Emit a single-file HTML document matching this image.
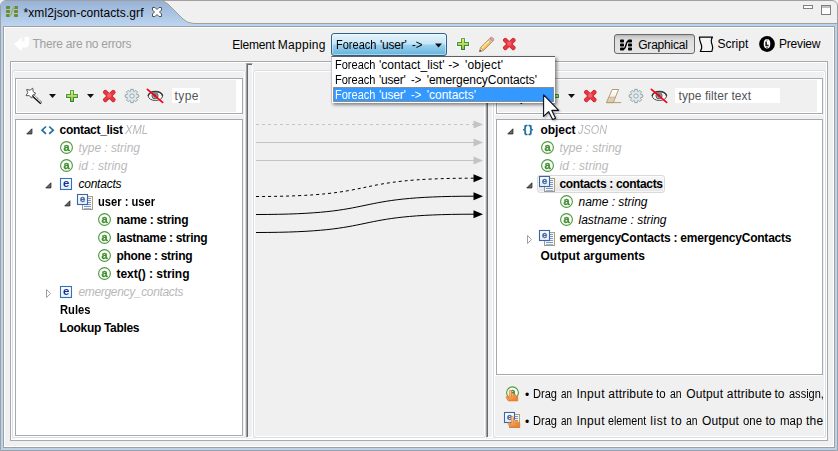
<!DOCTYPE html>
<html><head><meta charset="utf-8"><title>xml2json-contacts.grf</title>
<style>
html,body{margin:0;padding:0}
body{width:838px;height:451px;overflow:hidden;background:#f0f0f0;font:12px/14px "Liberation Sans",sans-serif;color:#000;position:relative}
.a{position:absolute;box-sizing:border-box}
svg{position:absolute;overflow:visible}
.t{position:absolute;transform-origin:0 0;white-space:pre;line-height:14px;font-size:12px;color:#000}
.t.b{font-weight:bold}
.t.i{font-style:italic}
.t.gi{font-style:italic;color:#b9b9bb}
.t.dis{color:#a0a0a0}
.t.w{color:#fff}
.t.flt{color:#555}
.t.hint{color:#000}
#win{left:0;top:0;width:838px;height:451px;border:1px solid #a0a0a0;border-radius:6px 6px 0 0;background:#f0f0f0}
#blue{left:1px;top:24px;width:836px;height:426px;background:#bad3ee}
#inner{left:3px;top:26px;width:832px;height:422px;border:1px solid #a0a0a0;background:#f0f0f0;box-shadow:inset 0 0 0 1px #fff}
#frame{left:10px;top:61px;width:818px;height:380px;border:1px solid #a8a9b0;box-shadow:inset 0 0 0 1px #fff}
.grp{border:1px solid #d5dfe5;border-radius:3px;box-shadow:inset 0 0 0 1px #fff,1px 1px 0 #fff;top:70px;height:368px}
.fr{border:1px solid #a8a9b0;box-shadow:-1px 1px 0 #fff;background:#fff}
.tb{background:#f0f0f0}
.sash{top:63px;height:375px;width:7px;border-left:1px solid #a0a0a0;border-top:1px solid #a0a0a0;border-right:1px solid #fff;border-bottom:1px solid #fff;background:#f0f0f0}
.sash i{position:absolute;left:0;top:0;right:0;bottom:0;border-left:1px solid #696969;border-top:1px solid #696969}
#combo{left:331px;top:33px;width:116px;height:23px;border:1px solid #2c628b;border-radius:3px;background:linear-gradient(#e5f4fc 0%,#c4e5f6 48%,#98d1ef 52%,#68b3db 100%);box-shadow:inset 0 0 0 1px rgba(255,255,255,.45)}
#pop{left:331px;top:56px;width:224px;height:47px;background:#fff;border-top:1px solid #5f5f5f;border-left:1px solid #c4c4cc;box-shadow:2px 2px 3px rgba(0,0,0,.45)}
#sel{left:333px;top:87px;width:221px;height:15px;background:#3399ff;outline:1px dotted #e08020;outline-offset:-1px}
#gbtn{left:614px;top:34px;width:81px;height:20px;border:1px solid #6a6a6a;border-radius:3px;background:linear-gradient(#b6b6b6 0,#d0d0d0 14%,#dedede 32%,#e6e6e6 100%)}
.field{background:#fff}
#selrow{left:537px;top:175px;width:128px;height:18px;border:1px solid #d9d9d9;border-radius:3px;background:linear-gradient(#f8f8f8,#e5e5e5);box-shadow:inset 0 0 0 1px rgba(255,255,255,.6)}

</style></head><body>
<div id="win" class="a"></div>
<div id="blue" class="a"></div>
<div id="inner" class="a"></div>
<!-- tab -->
<svg width="838" height="30" style="left:0;top:0">
<defs><linearGradient id="tg" x1="0" y1="0" x2="0" y2="1"><stop offset="0" stop-color="#96b2d6"/><stop offset="1" stop-color="#bdd5ef"/></linearGradient></defs>
<path d="M1 26 L1 5 Q1 1 5 1 L159 1 Q164.5 1 168 4.3 L183 19.3 Q187.5 23.5 194 23.5 L837 23.5 L837 26 Z" fill="#bad3ee"/>
<path d="M1 26 L1 5 Q1 1 5 1 L159 1 Q164.5 1 168 4.3 L183 19.3 Q187.5 23.5 194 23.5 L194 26 Z" fill="url(#tg)"/>
<path d="M159 0.5 Q164.5 0.5 168 4 L183 19 Q187.5 23.5 194 23.5 L837.5 23.5" fill="none" stroke="#a0a0a0" stroke-width="1"/>
</svg>
<div id="frame" class="a"></div>
<!-- left group -->
<div class="a grp" style="left:12px;width:234px"></div>
<div class="a fr" style="left:15px;top:78px;width:228px;height:36px"><div class="a tb" style="left:1px;top:1px;width:219px;height:32px"></div></div>
<div class="a field" style="left:172px;top:88px;width:28px;height:15px"></div>
<div class="a fr" style="left:15px;top:119px;width:228px;height:317px"></div>
<!-- mid group -->
<div class="a grp" style="left:253px;width:233px"></div>
<!-- right group -->
<div class="a grp" style="left:493px;width:333px"></div>
<div class="a fr" style="left:496px;top:78px;width:327px;height:36px"><div class="a tb" style="left:1px;top:1px;width:319px;height:32px"></div></div>
<div class="a field" style="left:675px;top:88px;width:105px;height:15px"></div>
<div class="a fr" style="left:496px;top:119px;width:327px;height:256px"></div>
<div id="selrow" class="a"></div>
<!-- sashes -->
<div class="a sash" style="left:246px"><i></i></div>
<div class="a sash" style="left:486px"><i></i></div>

<!-- top toolbar -->
<div id="combo" class="a"></div>
<div id="gbtn" class="a"></div>
<svg width="838" height="451" style="left:0;top:0" viewBox="0 0 838 451"><path d="M256 124.5 H474" stroke="#c3c3c3" stroke-width="1" stroke-dasharray="3 3" fill="none"/><path d="M483 124.5 L473.5 120.5 L473.5 128.5 Z" fill="#c3c3c3"/><path d="M256 142.5 H474" stroke="#c3c3c3" stroke-width="1" fill="none"/><path d="M483 142.5 L473.5 138.5 L473.5 146.5 Z" fill="#c3c3c3"/><path d="M256 160.5 H474" stroke="#c3c3c3" stroke-width="1" fill="none"/><path d="M483 160.5 L473.5 156.5 L473.5 164.5 Z" fill="#c3c3c3"/><path d="M256 196.5 C386.79999999999995 196.5 343.20000000000005 178.2 474 178.2" stroke="#000" stroke-width="1" fill="none" stroke-dasharray="3 3"/><path d="M483 178.2 L473.5 174.2 L473.5 182.2 Z" fill="#000"/><path d="M256 214.5 C386.79999999999995 214.5 343.20000000000005 196.2 474 196.2" stroke="#000" stroke-width="1" fill="none" /><path d="M483 196.2 L473.5 192.2 L473.5 200.2 Z" fill="#000"/><path d="M256 232.5 C386.79999999999995 232.5 343.20000000000005 214.2 474 214.2" stroke="#000" stroke-width="1" fill="none" /><path d="M483 214.2 L473.5 210.2 L473.5 218.2 Z" fill="#000"/></svg><svg width="838" height="451" style="left:0;top:0;opacity:.999" viewBox="0 0 838 451"><defs>
<linearGradient id="eg" x1="0" y1="0" x2="0" y2="1"><stop offset="0" stop-color="#fff"/><stop offset="1" stop-color="#e2effb"/></linearGradient>
<linearGradient id="pg" x1="0" y1="0" x2="0" y2="1"><stop offset="0" stop-color="#e6f060"/><stop offset="0.5" stop-color="#c2d84c"/><stop offset="1" stop-color="#90bc40"/></linearGradient>
<linearGradient id="pb" x1="0" y1="0" x2="0" y2="1"><stop offset="0" stop-color="#4fae62"/><stop offset="1" stop-color="#2a7a3a"/></linearGradient>
<linearGradient id="rg" gradientUnits="userSpaceOnUse" x1="0" y1="0" x2="0" y2="1"><stop offset="0" stop-color="#f05a64"/><stop offset="1" stop-color="#e03040"/></linearGradient>
<linearGradient id="hg" x1="0" y1="0" x2="0.3" y2="1"><stop offset="0" stop-color="#fde2c4"/><stop offset="0.55" stop-color="#f8b070"/><stop offset="1" stop-color="#ee8434"/></linearGradient>
<linearGradient id="erg" x1="0" y1="0" x2="0" y2="1"><stop offset="0" stop-color="#fff"/><stop offset="1" stop-color="#efe6d6"/></linearGradient>
</defs><rect x="6" y="6" width="4" height="3" rx="0.8" fill="#6b8b2c"/><rect x="14" y="6" width="4" height="3" rx="0.8" fill="#6b8b2c"/><rect x="6" y="10" width="4" height="3" rx="0.8" fill="#6b8b2c"/><rect x="14" y="10" width="4" height="3" rx="0.8" fill="#6b8b2c"/><rect x="6" y="14" width="4" height="3" rx="0.8" fill="#6b8b2c"/><rect x="14" y="14" width="4" height="3" rx="0.8" fill="#6b8b2c"/><path d="M9 15.7 C13 15.7 11 7.3 15 7.3" fill="none" stroke="#9db356" stroke-width="1.4"/><path transform="translate(152,7)" d="M0.5 0.5 L3 0.5 L5 2.5 L7 0.5 L9.5 0.5 L9.5 3 L7.5 5 L9.5 7 L9.5 9.5 L7 9.5 L5 7.5 L3 9.5 L0.5 9.5 L0.5 7 L2.5 5 L0.5 3 Z" fill="#fff" stroke="#505458" stroke-width="1" stroke-linejoin="miter"/><rect x="803.5" y="5.5" width="9" height="3" fill="#fff" stroke="#808080"/><rect x="821.5" y="5.5" width="9" height="9" fill="#fff" stroke="#808080"/><path d="M821.5 7 H830.5" stroke="#808080"/><path transform="translate(14,37)" d="M0 7.3 L7.6 0.6 L7.6 4.2 L10.6 4.2 L10.6 0 L15 0 L15 6.5 Q15 10.6 10.8 10.6 L7.6 10.6 L7.6 14.2 Z" fill="#fff"/><path d="M435 43.5 h7 l-3.5 4 z" fill="#101010"/><g transform="translate(457,38)"><path d="M4 0 h4 v4 h4 v4 h-4 v4 h-4 v-4 h-4 v-4 h4 z" fill="none" stroke="#fff" stroke-opacity="0.55" stroke-width="1.6"/><path d="M4 0 h4 v4 h4 v4 h-4 v4 h-4 v-4 h-4 v-4 h4 z" fill="url(#pb)"/><path d="M5 1 h2 v4 h4 v2 h-4 v4 h-2 v-4 h-4 v-2 h4 z" fill="url(#pg)"/></g><g transform="translate(479,37)"><path d="M0.5 14.6 L1.6 10.6 L10.9 1.3 L13.8 4.2 L4.5 13.5 Z" fill="#f0c060" stroke="#b8803c" stroke-width="0.8" stroke-linejoin="round"/><path d="M2.9 11.2 L11.6 2.5" stroke="#fdf0c0" stroke-width="1.1"/><path d="M9.3 2.9 L12.2 5.8 L13.8 4.2 L10.9 1.3 Z" fill="#c8c8cc" stroke="#9a9aa0" stroke-width="0.5"/><path d="M10.9 1.3 L11.8 0.5 Q12.9 0 13.8 0.9 L14.3 1.5 Q15 2.5 14.5 3.4 L13.8 4.2 Z" fill="#f0a8a0" stroke="#c07068" stroke-width="0.8"/><path d="M0.5 14.6 L1.6 10.6 L4.5 13.5 Z" fill="#f4e4c4" stroke="#b8803c" stroke-width="0.5"/><path d="M0.4 14.7 L1.1 12.4 L2.7 14 Z" fill="#2848a8"/></g><rect x="502.2" y="42.35" width="14.2" height="3.3" rx="1.1" transform="rotate(44 509.3 44)" fill="#c41c2a" stroke="#c8202e" stroke-width="1"/><rect x="502.2" y="42.35" width="14.2" height="3.3" rx="1.1" transform="rotate(-44 509.3 44)" fill="#c41c2a" stroke="#c8202e" stroke-width="1"/><rect x="502.2" y="42.35" width="14.2" height="3.3" rx="1.1" transform="rotate(44 509.3 44)" fill="#e8363f"/><rect x="502.2" y="42.35" width="14.2" height="3.3" rx="1.1" transform="rotate(-44 509.3 44)" fill="#e8363f"/><circle cx="509.3" cy="43.5" r="2.2" fill="#f4707a" opacity="0.7"/><rect x="620" y="39.5" width="4" height="3" rx="0.8" fill="#000"/><rect x="628" y="39.5" width="4" height="3" rx="0.8" fill="#000"/><rect x="620" y="43.5" width="4" height="3" rx="0.8" fill="#000"/><rect x="628" y="43.5" width="4" height="3" rx="0.8" fill="#000"/><rect x="620" y="47.5" width="4" height="3" rx="0.8" fill="#000"/><rect x="628" y="47.5" width="4" height="3" rx="0.8" fill="#000"/><path d="M623 49.2 C627 49.2 625 40.8 629 40.8" fill="none" stroke="#000" stroke-width="1.4"/><path transform="translate(699,36.5)" d="M0.4 0.6 L13.5 0.6 C11.2 4 12.2 6 13.2 8.5 C14.2 11 13.8 13 12.8 15 L1.3 15 C2 13.5 3 12 2.7 10 C2.4 7 0.4 5 0.4 0.6 Z" fill="#f4f4f4" stroke="#000" stroke-width="1.2" stroke-linejoin="round"/><circle cx="767" cy="44" r="7.9" fill="#000"/><ellipse cx="767" cy="43.8" rx="3.3" ry="4.7" fill="#fff"/><path d="M766.1 41.4 V45.4 H768.6" fill="none" stroke="#111" stroke-width="1.5"/><rect x="766.2" y="39.6" width="1.6" height="0.8" fill="#444"/><rect x="766.2" y="47.2" width="1.6" height="0.8" fill="#444"/><g transform="translate(26,88)"><path d="M6.6 7.6 L15.2 15.4" stroke="#111" stroke-width="2.5" stroke-linecap="butt"/><path d="M7.4 7.4 L15.4 14.6" stroke="#fff" stroke-width="1.1"/><path d="M8.0 6.9 L16 14.1" stroke="#222" stroke-width="0.7" stroke-dasharray="1 1"/><path d="M9.87 5.55 L6.76 6.94 L5.70 10.18 L3.42 7.65 L0.01 7.65 L1.72 4.70 L0.66 1.45 L4.00 2.16 L6.76 0.16 L7.11 3.55 Z" fill="#fff" stroke="#5a5a5a" stroke-width="1" stroke-linejoin="round"/></g><path d="M49 94 h7 l-3.5 4 z" fill="#101010"/><g transform="translate(66,90)"><path d="M4 0 h4 v4 h4 v4 h-4 v4 h-4 v-4 h-4 v-4 h4 z" fill="none" stroke="#fff" stroke-opacity="0.55" stroke-width="1.6"/><path d="M4 0 h4 v4 h4 v4 h-4 v4 h-4 v-4 h-4 v-4 h4 z" fill="url(#pb)"/><path d="M5 1 h2 v4 h4 v2 h-4 v4 h-2 v-4 h-4 v-2 h4 z" fill="url(#pg)"/></g><path d="M87 94 h7 l-3.5 4 z" fill="#101010"/><rect x="102.2" y="94.35" width="14.2" height="3.3" rx="1.1" transform="rotate(44 109.3 96)" fill="#c41c2a" stroke="#c8202e" stroke-width="1"/><rect x="102.2" y="94.35" width="14.2" height="3.3" rx="1.1" transform="rotate(-44 109.3 96)" fill="#c41c2a" stroke="#c8202e" stroke-width="1"/><rect x="102.2" y="94.35" width="14.2" height="3.3" rx="1.1" transform="rotate(44 109.3 96)" fill="#e8363f"/><rect x="102.2" y="94.35" width="14.2" height="3.3" rx="1.1" transform="rotate(-44 109.3 96)" fill="#e8363f"/><circle cx="109.3" cy="95.5" r="2.2" fill="#f4707a" opacity="0.7"/><path d="M130.72 89.32 L133.28 89.32 L133.48 91.22 L134.33 91.58 L135.81 90.37 L137.63 92.19 L136.42 93.67 L136.78 94.52 L138.68 94.72 L138.68 97.28 L136.78 97.48 L136.42 98.33 L137.63 99.81 L135.81 101.63 L134.33 100.42 L133.48 100.78 L133.28 102.68 L130.72 102.68 L130.52 100.78 L129.67 100.42 L128.19 101.63 L126.37 99.81 L127.58 98.33 L127.22 97.48 L125.32 97.28 L125.32 94.72 L127.22 94.52 L127.58 93.67 L126.37 92.19 L128.19 90.37 L129.67 91.58 L130.52 91.22 Z" fill="#dfe8ea" stroke="#8c9fa3" stroke-width="0.9" stroke-linejoin="round"/><circle cx="132" cy="96" r="2.1" fill="#f4f7f8" stroke="#8c9fa3" stroke-width="0.9"/><ellipse cx="155.4" cy="96" rx="7.2" ry="4.5" fill="#f6f6f6" stroke="#4c4c4c" stroke-width="1"/><path d="M148.20000000000002 96 A7.2 4.5 0 0 1 162.6 96" fill="none" stroke="#3c3c3c" stroke-width="1.5"/><circle cx="155.0" cy="95.8" r="3.1" fill="#9a9a9a" stroke="#5a5a5a" stroke-width="0.9"/><circle cx="155.0" cy="95.6" r="1.3" fill="#444"/><path d="M147.4 89.4 L162.6 102.4" stroke="#f60018" stroke-width="1.7" stroke-linecap="round"/><g transform="translate(507,88)"><path d="M6.6 7.6 L15.2 15.4" stroke="#111" stroke-width="2.5" stroke-linecap="butt"/><path d="M7.4 7.4 L15.4 14.6" stroke="#fff" stroke-width="1.1"/><path d="M8.0 6.9 L16 14.1" stroke="#222" stroke-width="0.7" stroke-dasharray="1 1"/><path d="M9.87 5.55 L6.76 6.94 L5.70 10.18 L3.42 7.65 L0.01 7.65 L1.72 4.70 L0.66 1.45 L4.00 2.16 L6.76 0.16 L7.11 3.55 Z" fill="#fff" stroke="#5a5a5a" stroke-width="1" stroke-linejoin="round"/></g><path d="M530 94 h7 l-3.5 4 z" fill="#101010"/><g transform="translate(547,90)"><path d="M4 0 h4 v4 h4 v4 h-4 v4 h-4 v-4 h-4 v-4 h4 z" fill="none" stroke="#fff" stroke-opacity="0.55" stroke-width="1.6"/><path d="M4 0 h4 v4 h4 v4 h-4 v4 h-4 v-4 h-4 v-4 h4 z" fill="url(#pb)"/><path d="M5 1 h2 v4 h4 v2 h-4 v4 h-2 v-4 h-4 v-2 h4 z" fill="url(#pg)"/></g><path d="M568 94 h7 l-3.5 4 z" fill="#101010"/><rect x="583.1999999999999" y="94.35" width="14.2" height="3.3" rx="1.1" transform="rotate(44 590.3 96)" fill="#c41c2a" stroke="#c8202e" stroke-width="1"/><rect x="583.1999999999999" y="94.35" width="14.2" height="3.3" rx="1.1" transform="rotate(-44 590.3 96)" fill="#c41c2a" stroke="#c8202e" stroke-width="1"/><rect x="583.1999999999999" y="94.35" width="14.2" height="3.3" rx="1.1" transform="rotate(44 590.3 96)" fill="#e8363f"/><rect x="583.1999999999999" y="94.35" width="14.2" height="3.3" rx="1.1" transform="rotate(-44 590.3 96)" fill="#e8363f"/><circle cx="590.3" cy="95.5" r="2.2" fill="#f4707a" opacity="0.7"/><g transform="translate(606,89)"><path d="M6.2 0.5 L12.6 0.5 L7.2 13.6 L0.5 13.6 Z" fill="url(#erg)" stroke="#b39b6b" stroke-width="1"/><path d="M2.9 8.2 L9.4 8.2 L7.2 13.6 L0.5 13.6 Z" fill="#dccdb4" stroke="#b39b6b" stroke-width="0.6"/><path d="M0.5 13.6 L15.2 13.6" stroke="#b39b6b" stroke-width="1"/></g><path d="M634.72 89.32 L637.28 89.32 L637.48 91.22 L638.33 91.58 L639.81 90.37 L641.63 92.19 L640.42 93.67 L640.78 94.52 L642.68 94.72 L642.68 97.28 L640.78 97.48 L640.42 98.33 L641.63 99.81 L639.81 101.63 L638.33 100.42 L637.48 100.78 L637.28 102.68 L634.72 102.68 L634.52 100.78 L633.67 100.42 L632.19 101.63 L630.37 99.81 L631.58 98.33 L631.22 97.48 L629.32 97.28 L629.32 94.72 L631.22 94.52 L631.58 93.67 L630.37 92.19 L632.19 90.37 L633.67 91.58 L634.52 91.22 Z" fill="#dfe8ea" stroke="#8c9fa3" stroke-width="0.9" stroke-linejoin="round"/><circle cx="636" cy="96" r="2.1" fill="#f4f7f8" stroke="#8c9fa3" stroke-width="0.9"/><ellipse cx="659.4" cy="96" rx="7.2" ry="4.5" fill="#f6f6f6" stroke="#4c4c4c" stroke-width="1"/><path d="M652.1999999999999 96 A7.2 4.5 0 0 1 666.6 96" fill="none" stroke="#3c3c3c" stroke-width="1.5"/><circle cx="659.0" cy="95.8" r="3.1" fill="#9a9a9a" stroke="#5a5a5a" stroke-width="0.9"/><circle cx="659.0" cy="95.6" r="1.3" fill="#444"/><path d="M651.4 89.4 L666.6 102.4" stroke="#f60018" stroke-width="1.7" stroke-linecap="round"/><path d="M26.8 133.9 L31.9 133.9 L31.9 128.8 Z" fill="#686868" stroke="#2a2a2a" stroke-width="0.9" stroke-linejoin="round"/><path d="M46 126.5 L42 130.2 L46 133.8 M49.2 126.5 L53.2 130.2 L49.2 133.8" fill="none" stroke="#1e6e9c" stroke-width="1.7"/><circle cx="66.5" cy="147.5" r="5.9" fill="#fff" stroke="#4c9c3c" stroke-width="1.15"/><text x="66.5" y="150.7" text-anchor="middle" font-family="Liberation Sans, sans-serif" font-weight="bold" font-size="11" fill="#3f8f2f" stroke="#3f8f2f" stroke-width="0.3">a</text><circle cx="66.5" cy="165.5" r="5.9" fill="#fff" stroke="#4c9c3c" stroke-width="1.15"/><text x="66.5" y="168.7" text-anchor="middle" font-family="Liberation Sans, sans-serif" font-weight="bold" font-size="11" fill="#3f8f2f" stroke="#3f8f2f" stroke-width="0.3">a</text><path d="M45.8 187.9 L50.9 187.9 L50.9 182.8 Z" fill="#686868" stroke="#2a2a2a" stroke-width="0.9" stroke-linejoin="round"/><rect x="60.5" y="178.5" width="11" height="11" fill="url(#eg)" stroke="#3573b5" stroke-width="1.1"/><text x="66.2" y="187.1" text-anchor="middle" font-family="Liberation Sans, sans-serif" font-weight="bold" font-size="11.5" fill="#1a2f9a">e</text><path d="M64.8 205.9 L69.9 205.9 L69.9 200.8 Z" fill="#686868" stroke="#2a2a2a" stroke-width="0.9" stroke-linejoin="round"/><rect x="82.5" y="196.5" width="10" height="13" fill="#f4f7fc" stroke="#9a9a8a" stroke-width="1"/><path d="M82.5 196.5 H92.5 V209.5" fill="none" stroke="#b0a070" stroke-width="1"/><rect x="88" y="198" width="3" height="1" fill="#8494c8"/><rect x="88" y="200" width="3" height="1" fill="#8494c8"/><rect x="88" y="202" width="3" height="1" fill="#8494c8"/><rect x="88" y="204" width="3" height="1" fill="#8494c8"/><rect x="88" y="206" width="3" height="1" fill="#8494c8"/><rect x="84" y="206" width="7" height="1" fill="#8494c8"/><rect x="84" y="208" width="7" height="1" fill="#a4b0d8"/><rect x="77.5" y="194.5" width="10" height="10" fill="url(#eg)" stroke="#3867a8" stroke-width="1.1"/><text x="82.6" y="202.2" text-anchor="middle" font-family="Liberation Sans, sans-serif" font-weight="bold" font-size="9.5" fill="#55679f" stroke="#55679f" stroke-width="0.4">e</text><circle cx="104.5" cy="219.5" r="5.9" fill="#fff" stroke="#4c9c3c" stroke-width="1.15"/><text x="104.5" y="222.7" text-anchor="middle" font-family="Liberation Sans, sans-serif" font-weight="bold" font-size="11" fill="#3f8f2f" stroke="#3f8f2f" stroke-width="0.3">a</text><circle cx="104.5" cy="237.5" r="5.9" fill="#fff" stroke="#4c9c3c" stroke-width="1.15"/><text x="104.5" y="240.7" text-anchor="middle" font-family="Liberation Sans, sans-serif" font-weight="bold" font-size="11" fill="#3f8f2f" stroke="#3f8f2f" stroke-width="0.3">a</text><circle cx="104.5" cy="255.5" r="5.9" fill="#fff" stroke="#4c9c3c" stroke-width="1.15"/><text x="104.5" y="258.7" text-anchor="middle" font-family="Liberation Sans, sans-serif" font-weight="bold" font-size="11" fill="#3f8f2f" stroke="#3f8f2f" stroke-width="0.3">a</text><circle cx="104.5" cy="273.5" r="5.9" fill="#fff" stroke="#4c9c3c" stroke-width="1.15"/><text x="104.5" y="276.7" text-anchor="middle" font-family="Liberation Sans, sans-serif" font-weight="bold" font-size="11" fill="#3f8f2f" stroke="#3f8f2f" stroke-width="0.3">a</text><path d="M46.5 289.5 L50.6 293.5 L46.5 297.5 Z" fill="#fff" stroke="#a0a0a0" stroke-width="1"/><rect x="60.5" y="286.5" width="11" height="11" fill="url(#eg)" stroke="#3573b5" stroke-width="1.1"/><text x="66.2" y="295.1" text-anchor="middle" font-family="Liberation Sans, sans-serif" font-weight="bold" font-size="11.5" fill="#1a2f9a">e</text><path d="M507.8 133.9 L512.9 133.9 L512.9 128.8 Z" fill="#686868" stroke="#2a2a2a" stroke-width="0.9" stroke-linejoin="round"/><text x="523" y="133.2" font-family="Liberation Sans, sans-serif" font-weight="bold" font-size="11.5" fill="#1e6e9c" stroke="#1e6e9c" stroke-width="0.35" letter-spacing="1.1">{}</text><circle cx="547.5" cy="147.5" r="5.9" fill="#fff" stroke="#4c9c3c" stroke-width="1.15"/><text x="547.5" y="150.7" text-anchor="middle" font-family="Liberation Sans, sans-serif" font-weight="bold" font-size="11" fill="#3f8f2f" stroke="#3f8f2f" stroke-width="0.3">a</text><circle cx="547.5" cy="165.5" r="5.9" fill="#fff" stroke="#4c9c3c" stroke-width="1.15"/><text x="547.5" y="168.7" text-anchor="middle" font-family="Liberation Sans, sans-serif" font-weight="bold" font-size="11" fill="#3f8f2f" stroke="#3f8f2f" stroke-width="0.3">a</text><path d="M526.8 187.9 L531.9 187.9 L531.9 182.8 Z" fill="#686868" stroke="#2a2a2a" stroke-width="0.9" stroke-linejoin="round"/><rect x="544.5" y="178.5" width="10" height="13" fill="#f4f7fc" stroke="#9a9a8a" stroke-width="1"/><path d="M544.5 178.5 H554.5 V191.5" fill="none" stroke="#b0a070" stroke-width="1"/><rect x="550" y="180" width="3" height="1" fill="#8494c8"/><rect x="550" y="182" width="3" height="1" fill="#8494c8"/><rect x="550" y="184" width="3" height="1" fill="#8494c8"/><rect x="550" y="186" width="3" height="1" fill="#8494c8"/><rect x="550" y="188" width="3" height="1" fill="#8494c8"/><rect x="546" y="188" width="7" height="1" fill="#8494c8"/><rect x="546" y="190" width="7" height="1" fill="#a4b0d8"/><rect x="539.5" y="176.5" width="10" height="10" fill="url(#eg)" stroke="#3867a8" stroke-width="1.1"/><text x="544.6" y="184.2" text-anchor="middle" font-family="Liberation Sans, sans-serif" font-weight="bold" font-size="9.5" fill="#55679f" stroke="#55679f" stroke-width="0.4">e</text><circle cx="566.5" cy="201.5" r="5.9" fill="#fff" stroke="#4c9c3c" stroke-width="1.15"/><text x="566.5" y="204.7" text-anchor="middle" font-family="Liberation Sans, sans-serif" font-weight="bold" font-size="11" fill="#3f8f2f" stroke="#3f8f2f" stroke-width="0.3">a</text><circle cx="566.5" cy="219.5" r="5.9" fill="#fff" stroke="#4c9c3c" stroke-width="1.15"/><text x="566.5" y="222.7" text-anchor="middle" font-family="Liberation Sans, sans-serif" font-weight="bold" font-size="11" fill="#3f8f2f" stroke="#3f8f2f" stroke-width="0.3">a</text><path d="M527.5 235.5 L531.6 239.5 L527.5 243.5 Z" fill="#fff" stroke="#a0a0a0" stroke-width="1"/><rect x="544.5" y="232.5" width="10" height="13" fill="#f4f7fc" stroke="#9a9a8a" stroke-width="1"/><path d="M544.5 232.5 H554.5 V245.5" fill="none" stroke="#b0a070" stroke-width="1"/><rect x="550" y="234" width="3" height="1" fill="#8494c8"/><rect x="550" y="236" width="3" height="1" fill="#8494c8"/><rect x="550" y="238" width="3" height="1" fill="#8494c8"/><rect x="550" y="240" width="3" height="1" fill="#8494c8"/><rect x="550" y="242" width="3" height="1" fill="#8494c8"/><rect x="546" y="242" width="7" height="1" fill="#8494c8"/><rect x="546" y="244" width="7" height="1" fill="#a4b0d8"/><rect x="539.5" y="230.5" width="10" height="10" fill="url(#eg)" stroke="#3867a8" stroke-width="1.1"/><text x="544.6" y="238.2" text-anchor="middle" font-family="Liberation Sans, sans-serif" font-weight="bold" font-size="9.5" fill="#55679f" stroke="#55679f" stroke-width="0.4">e</text><circle cx="512.5" cy="392.8" r="5.9" fill="#fff" stroke="#4c9c3c" stroke-width="1.15"/><text x="512.5" y="396.0" text-anchor="middle" font-family="Liberation Sans, sans-serif" font-weight="bold" font-size="11" fill="#3f8f2f" stroke="#3f8f2f" stroke-width="0.3">a</text><g transform="translate(506,390)"><path d="M3.2 1 Q3.2 0 4.3 0 Q5.4 0 5.4 1 L5.4 3.8 Q6.8 3 7.8 3.9 L7.9 4.8 Q9.2 4.2 10 5 L10.1 6.2 Q11.8 5.8 11.8 7.2 L11.8 10.9 L2.4 10.9 L0.2 7.8 Q-0.2 6.8 0.8 6.3 Q1.6 6 2.2 6.8 L3.2 7.8 Z" fill="url(#hg)" stroke="#dc7c2c" stroke-width="0.7" stroke-linejoin="round"/><path d="M5.6 4.2 V7 M8 5.2 V7.6 M10.2 6.4 V8.2" stroke="#d47426" stroke-width="0.7" fill="none"/><path d="M0.9 7 L2.6 9.2" stroke="#d47426" stroke-width="0.6" stroke-dasharray="0.8 0.8" fill="none"/></g><rect x="509.5" y="414.5" width="10" height="13" fill="#f4f7fc" stroke="#9a9a8a" stroke-width="1"/><path d="M509.5 414.5 H519.5 V427.5" fill="none" stroke="#b0a070" stroke-width="1"/><rect x="515" y="416" width="3" height="1" fill="#8494c8"/><rect x="515" y="418" width="3" height="1" fill="#8494c8"/><rect x="515" y="420" width="3" height="1" fill="#8494c8"/><rect x="515" y="422" width="3" height="1" fill="#8494c8"/><rect x="515" y="424" width="3" height="1" fill="#8494c8"/><rect x="511" y="424" width="7" height="1" fill="#8494c8"/><rect x="511" y="426" width="7" height="1" fill="#a4b0d8"/><rect x="504.5" y="412.5" width="10" height="10" fill="url(#eg)" stroke="#3867a8" stroke-width="1.1"/><text x="509.6" y="420.2" text-anchor="middle" font-family="Liberation Sans, sans-serif" font-weight="bold" font-size="9.5" fill="#55679f" stroke="#55679f" stroke-width="0.4">e</text><g transform="translate(508,416.4)"><path d="M3.2 1 Q3.2 0 4.3 0 Q5.4 0 5.4 1 L5.4 3.8 Q6.8 3 7.8 3.9 L7.9 4.8 Q9.2 4.2 10 5 L10.1 6.2 Q11.8 5.8 11.8 7.2 L11.8 10.9 L2.4 10.9 L0.2 7.8 Q-0.2 6.8 0.8 6.3 Q1.6 6 2.2 6.8 L3.2 7.8 Z" fill="url(#hg)" stroke="#dc7c2c" stroke-width="0.7" stroke-linejoin="round"/><path d="M5.6 4.2 V7 M8 5.2 V7.6 M10.2 6.4 V8.2" stroke="#d47426" stroke-width="0.7" fill="none"/><path d="M0.9 7 L2.6 9.2" stroke="#d47426" stroke-width="0.6" stroke-dasharray="0.8 0.8" fill="none"/></g></svg>
<!-- popup -->
<div id="pop" class="a"></div>
<div id="sel" class="a"></div>

<span id="t0" class="t " style="left:23.5px;top:6.0px;letter-spacing:0.093px;">*xml2json-contacts.grf</span>
<span id="t1" class="t dis" style="left:32.5px;top:37.0px;letter-spacing:-0.244px;">There are no errors</span>
<span id="t2" class="t " style="left:232.2px;top:38.0px;letter-spacing:-0.172px;">Element</span>
<span id="t3" class="t " style="left:277.8px;top:38.0px;letter-spacing:0.278px;">Mapping</span>
<span id="t4" class="t " style="left:335.5px;top:38.0px;transform:scaleX(0.9175);">Foreach</span>
<span id="t5" class="t " style="left:379.9px;top:38.0px;letter-spacing:-0.207px;">'user'</span>
<span id="t6" class="t " style="left:411.5px;top:38.0px;transform:scaleX(0.9532);">-></span>
<span id="t7" class="t " style="left:638.2px;top:38.0px;letter-spacing:-0.195px;">Graphical</span>
<span id="t8" class="t " style="left:717.5px;top:37.0px;letter-spacing:0.022px;">Script</span>
<span id="t9" class="t " style="left:779.0px;top:37.0px;letter-spacing:-0.198px;">Preview</span>
<span id="t10" class="t " style="left:334.5px;top:58.0px;transform:scaleX(0.9175);">Foreach</span>
<span id="t11" class="t " style="left:378.9px;top:58.0px;letter-spacing:0.075px;">'contact_list'</span>
<span id="t12" class="t " style="left:448.2px;top:58.0px;letter-spacing:-0.016px;">-></span>
<span id="t13" class="t " style="left:464.9px;top:58.0px;letter-spacing:0.213px;">'object'</span>
<span id="t14" class="t " style="left:334.5px;top:73.0px;transform:scaleX(0.9175);">Foreach</span>
<span id="t15" class="t " style="left:378.9px;top:73.0px;letter-spacing:-0.207px;">'user'</span>
<span id="t16" class="t " style="left:410.5px;top:73.0px;transform:scaleX(0.9532);">-></span>
<span id="t17" class="t " style="left:426.7px;top:73.0px;letter-spacing:-0.056px;">'emergencyContacts'</span>
<span id="t18" class="t w" style="left:334.5px;top:88.0px;transform:scaleX(0.9175);">Foreach</span>
<span id="t19" class="t w" style="left:378.9px;top:88.0px;letter-spacing:-0.207px;">'user'</span>
<span id="t20" class="t w" style="left:410.5px;top:88.0px;transform:scaleX(0.9532);">-></span>
<span id="t21" class="t w" style="left:426.7px;top:88.0px;letter-spacing:0.002px;">'contacts'</span>
<span id="t22" class="t flt" style="left:174.5px;top:89.0px;letter-spacing:0.438px;">type</span>
<span id="t23" class="t flt" style="left:678.5px;top:89.0px;letter-spacing:0.075px;">type filter text</span>
<span id="t24" class="t b" style="left:59.5px;top:123.0px;letter-spacing:-0.290px;">contact_list</span>
<span id="t25" class="t gi" style="left:125.0px;top:123.0px;transform:scaleX(0.9316);">XML</span>
<span id="t26" class="t gi" style="left:78.5px;top:141.0px;letter-spacing:-0.044px;">type : string</span>
<span id="t27" class="t gi" style="left:78.5px;top:159.0px;letter-spacing:0.031px;">id : string</span>
<span id="t28" class="t i" style="left:78.5px;top:177.0px;letter-spacing:-0.243px;">contacts</span>
<span id="t29" class="t b" style="left:97.5px;top:195.0px;transform:scaleX(0.9290);">user : user</span>
<span id="t30" class="t b" style="left:116.5px;top:213.0px;letter-spacing:-0.280px;">name : string</span>
<span id="t31" class="t b" style="left:116.5px;top:231.0px;letter-spacing:-0.314px;">lastname : string</span>
<span id="t32" class="t b" style="left:116.5px;top:249.0px;letter-spacing:-0.308px;">phone : string</span>
<span id="t33" class="t b" style="left:116.5px;top:267.0px;letter-spacing:-0.025px;">text() : string</span>
<span id="t34" class="t gi" style="left:78.5px;top:285.0px;letter-spacing:-0.337px;">emergency_contacts</span>
<span id="t35" class="t b" style="left:59.5px;top:303.0px;transform:scaleX(0.9331);">Rules</span>
<span id="t36" class="t b" style="left:59.5px;top:321.0px;letter-spacing:-0.316px;">Lookup Tables</span>
<span id="t37" class="t b" style="left:540.5px;top:123.0px;letter-spacing:-0.069px;">object</span>
<span id="t38" class="t gi" style="left:577.5px;top:123.0px;transform:scaleX(0.9058);">JSON</span>
<span id="t39" class="t gi" style="left:559.5px;top:141.0px;letter-spacing:-0.003px;">type : string</span>
<span id="t40" class="t gi" style="left:559.5px;top:159.0px;letter-spacing:0.031px;">id : string</span>
<span id="t41" class="t b" style="left:559.5px;top:177.0px;letter-spacing:-0.326px;">contacts : contacts</span>
<span id="t42" class="t i" style="left:578.5px;top:195.0px;letter-spacing:-0.031px;">name : string</span>
<span id="t43" class="t i" style="left:578.5px;top:213.0px;letter-spacing:-0.003px;">lastname : string</span>
<span id="t44" class="t b" style="left:559.5px;top:231.0px;letter-spacing:-0.225px;">emergencyContacts : emergencyContacts</span>
<span id="t45" class="t b" style="left:540.5px;top:249.0px;letter-spacing:0.033px;">Output arguments</span>
<span id="t46" class="t hint" style="left:525.1px;top:388.0px;letter-spacing:0.497px;">•</span>
<span id="t47" class="t hint" style="left:533.2px;top:387.0px;transform:scaleX(0.9225);">Drag</span>
<span id="t48" class="t hint" style="left:561.2px;top:387.0px;transform:scaleX(0.8234);">an</span>
<span id="t49" class="t hint" style="left:576.4px;top:387.0px;letter-spacing:0.349px;">Input</span>
<span id="t50" class="t hint" style="left:608.3px;top:387.0px;letter-spacing:0.193px;">attribute</span>
<span id="t51" class="t hint" style="left:656.0px;top:387.0px;transform:scaleX(0.9585);">to</span>
<span id="t52" class="t hint" style="left:669.5px;top:387.0px;transform:scaleX(0.8683);">an</span>
<span id="t53" class="t hint" style="left:686.3px;top:387.0px;letter-spacing:0.134px;">Output</span>
<span id="t54" class="t hint" style="left:726.8px;top:387.0px;letter-spacing:0.193px;">attribute</span>
<span id="t55" class="t hint" style="left:774.5px;top:387.0px;letter-spacing:-0.016px;">to</span>
<span id="t56" class="t hint" style="left:788.8px;top:387.0px;transform:scaleX(0.9177);">assign,</span>
<span id="t57" class="t hint" style="left:525.1px;top:415.0px;letter-spacing:0.497px;">•</span>
<span id="t58" class="t hint" style="left:533.2px;top:414.0px;transform:scaleX(0.9225);">Drag</span>
<span id="t59" class="t hint" style="left:561.2px;top:414.0px;transform:scaleX(0.8234);">an</span>
<span id="t60" class="t hint" style="left:576.4px;top:414.0px;letter-spacing:0.349px;">Input</span>
<span id="t61" class="t hint" style="left:608.4px;top:414.0px;transform:scaleX(0.8945);">element</span>
<span id="t62" class="t hint" style="left:650.3px;top:414.0px;letter-spacing:0.509px;">list</span>
<span id="t63" class="t hint" style="left:671.0px;top:414.0px;letter-spacing:0.584px;">to</span>
<span id="t64" class="t hint" style="left:685.8px;top:414.0px;transform:scaleX(0.8608);">an</span>
<span id="t65" class="t hint" style="left:702.0px;top:414.0px;letter-spacing:0.174px;">Output</span>
<span id="t66" class="t hint" style="left:743.0px;top:414.0px;transform:scaleX(0.9535);">one</span>
<span id="t67" class="t hint" style="left:765.5px;top:414.0px;letter-spacing:-0.016px;">to</span>
<span id="t68" class="t hint" style="left:779.9px;top:414.0px;transform:scaleX(0.9553);">map</span>
<span id="t69" class="t hint" style="left:806.0px;top:414.0px;letter-spacing:0.256px;">the</span>
<svg width="20" height="28" style="left:543px;top:94px;filter:drop-shadow(1px 1.5px 1px rgba(0,0,0,.35))" viewBox="0 0 20 28"><path d="M0.6 0.8 L0.6 22.4 L5.6 17.6 L9.6 25.6 L12.6 24.2 L8.8 16.4 L15.6 16.4 Z" fill="#fff" stroke="#0a1020" stroke-width="1.1" stroke-linejoin="round"/></svg>

</body></html>
